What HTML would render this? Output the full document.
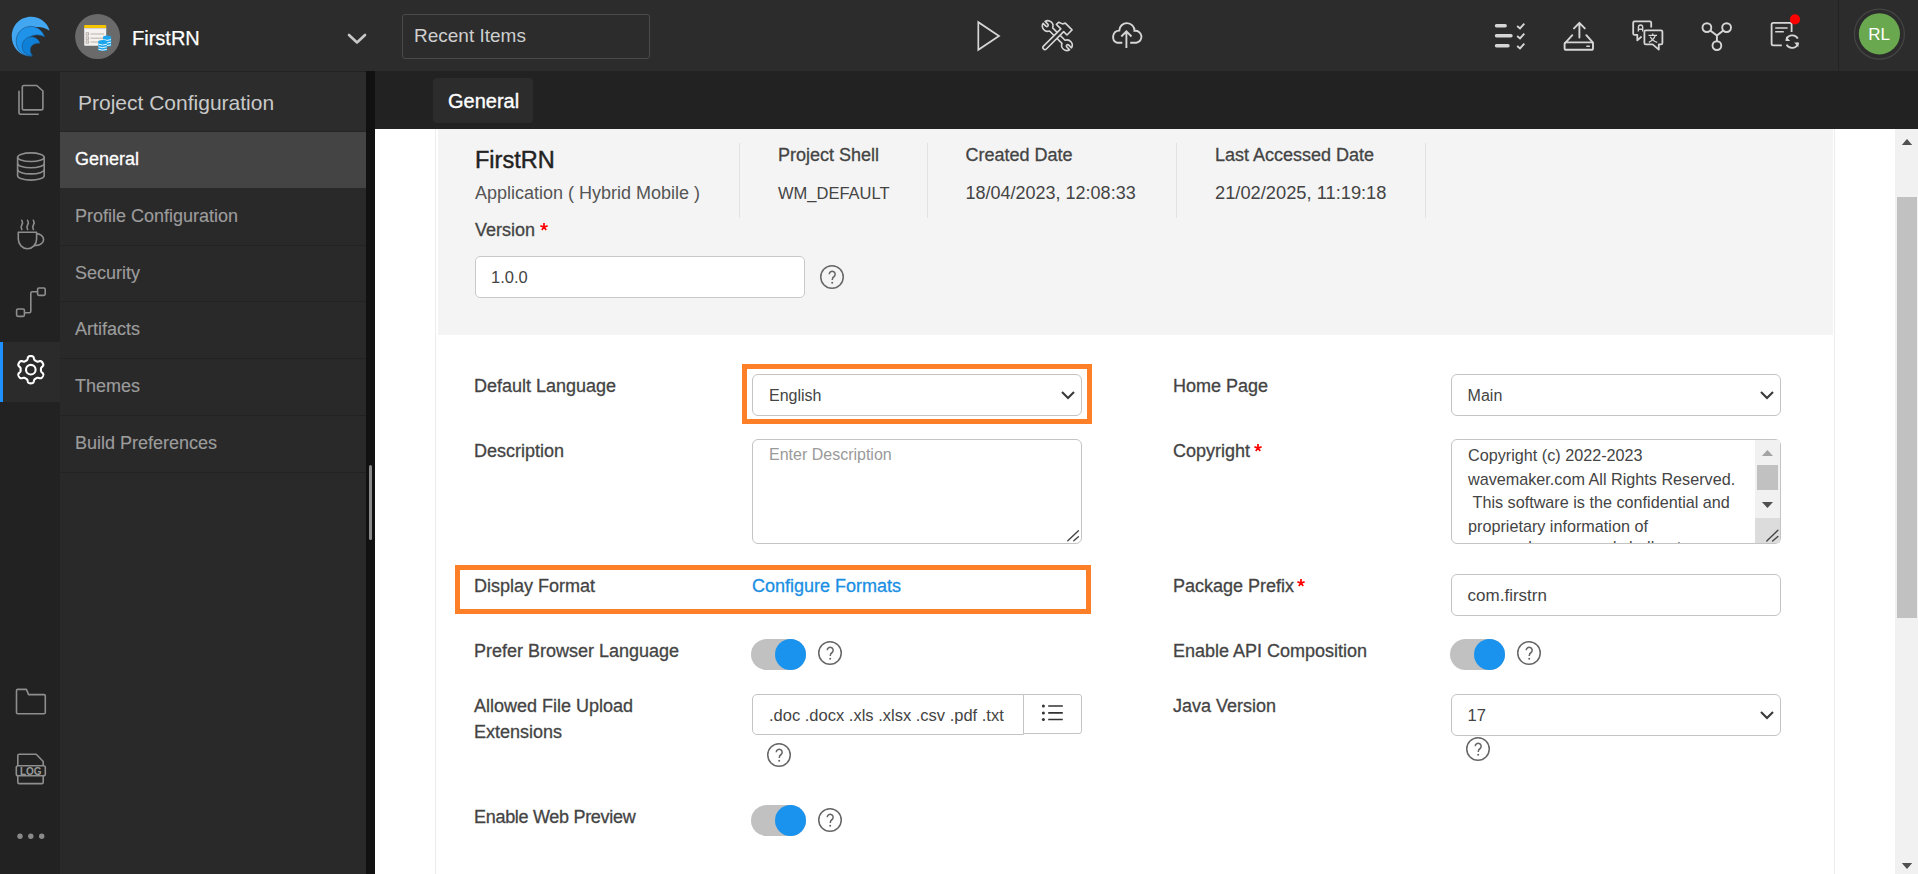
<!DOCTYPE html>
<html><head><meta charset="utf-8"><style>
*{box-sizing:border-box;margin:0;padding:0}
html,body{width:1918px;height:874px;overflow:hidden;background:#fff;font-family:"Liberation Sans",sans-serif}
.a{position:absolute}
.t{position:absolute;white-space:nowrap;line-height:1}
svg{position:absolute;overflow:visible}
</style></head><body>
<div class="a" style="left:0px;top:0px;width:1918px;height:71px;background:#2c2c2c"></div>
<div class="a" style="left:0px;top:71px;width:60px;height:803px;background:#222"></div>
<div class="a" style="left:60px;top:71px;width:306px;height:803px;background:#292929"></div>
<div class="a" style="left:60px;top:72px;width:306px;height:59px;background:#2c2c2c"></div>
<div class="a" style="left:60px;top:71px;width:306px;height:1px;background:#222"></div>
<div class="a" style="left:60px;top:131px;width:306px;height:1px;background:#252525"></div>
<div class="a" style="left:366px;top:71px;width:9px;height:803px;background:#111"></div>
<div class="a" style="left:369px;top:465px;width:3px;height:75px;background:#8a8a8a;border-radius:1.5px"></div>
<div class="a" style="left:375px;top:71px;width:1543px;height:58px;background:#222"></div>
<div class="t" style="left:132.0px;top:28.27px;font-size:20px;color:#fff;-webkit-text-stroke:0.25px #fff;">FirstRN</div>
<div class="a" style="left:402px;top:14px;width:248px;height:45px;border:1px solid #4a4a4a;border-radius:3px"></div>
<div class="t" style="left:414.0px;top:26.22px;font-size:19px;color:#cfcfcf;">Recent Items</div>
<div class="a" style="left:1838px;top:0px;width:1px;height:71px;background:#222"></div>
<div class="t" style="left:78.0px;top:91.72px;font-size:21px;color:#c9c9c9;">Project Configuration</div>
<div class="a" style="left:60px;top:132px;width:306px;height:56px;background:#444"></div>
<div class="a" style="left:60px;top:245px;width:306px;height:1px;background:#222"></div>
<div class="a" style="left:60px;top:301px;width:306px;height:1px;background:#222"></div>
<div class="a" style="left:60px;top:358px;width:306px;height:1px;background:#222"></div>
<div class="a" style="left:60px;top:415px;width:306px;height:1px;background:#222"></div>
<div class="a" style="left:60px;top:472px;width:306px;height:1px;background:#222"></div>
<div class="t" style="left:75.0px;top:149.66px;font-size:18px;color:#fff;-webkit-text-stroke:0.3px #fff;">General</div>
<div class="t" style="left:75.0px;top:207.46px;font-size:18px;color:#9c9c9c;-webkit-text-stroke:0.15px #9c9c9c;">Profile Configuration</div>
<div class="t" style="left:75.0px;top:263.86px;font-size:18px;color:#9c9c9c;-webkit-text-stroke:0.15px #9c9c9c;">Security</div>
<div class="t" style="left:75.0px;top:320.26px;font-size:18px;color:#9c9c9c;-webkit-text-stroke:0.15px #9c9c9c;">Artifacts</div>
<div class="t" style="left:75.0px;top:376.96px;font-size:18px;color:#9c9c9c;-webkit-text-stroke:0.15px #9c9c9c;">Themes</div>
<div class="t" style="left:75.0px;top:434.06px;font-size:18px;color:#9c9c9c;-webkit-text-stroke:0.15px #9c9c9c;">Build Preferences</div>
<div class="a" style="left:0px;top:342px;width:60px;height:60px;background:#2b2b2b"></div>
<div class="a" style="left:0px;top:342px;width:3px;height:60px;background:#1e90ff"></div>
<svg style="left:0;top:0" width="1918" height="71">
<!-- logo -->
<path d="M49.6,30.8 C47.5,22.5 40,16.8 31,16.8 C20,16.8 11.8,25.5 11.8,36.5 C11.8,46.5 18.5,54 26.5,55.8 L30,56 C21,50 18,40 24,32.5 C30,25.5 43,25.5 49.6,30.8Z" fill="#42a6f1"/>
<path d="M44.8,37 C42.5,30 37,26.4 31,26.4 C22.5,26.4 16.2,33 16.2,41 C16.2,48.5 21,54.5 28,56 L32,56.2 C25,51 23.5,43 28,38.5 C32.5,34 40,34 44.8,37Z" fill="#1f92ea" stroke="#1d4f7a" stroke-width="0.6"/>
<path d="M40.1,43.3 C38.5,39 35,36.8 31.5,36.8 C26,36.8 22.2,41.5 22.2,46.5 C22.2,51.5 26,55.5 32.5,56 C30,52.5 29.8,49 31.2,46.6 C33,44 36.5,43 40.1,43.3Z" fill="#0f80d8" stroke="#1d4f7a" stroke-width="0.6"/>
<!-- project icon -->
<circle cx="97.6" cy="36.6" r="22.5" fill="#6a6a6a"/>
<rect x="84.2" y="27.5" width="22" height="18.3" fill="#f3f2f0" rx="0.8"/>
<rect x="84.2" y="24.9" width="22" height="3.3" fill="#f5c400" rx="0.8"/>
<rect x="84.2" y="28" width="22" height="0.8" fill="#c8c8de"/>
<g fill="#c9bfb5"><rect x="90.5" y="33.3" width="13.5" height="1.3"/><rect x="90.5" y="37.6" width="13.5" height="1.3"/><rect x="90.5" y="41.4" width="13.5" height="1.3"/></g>
<g fill="none" stroke="#b0a79e" stroke-width="0.9"><rect x="86.2" y="32.8" width="2.4" height="2.3"/><rect x="86.2" y="37" width="2.4" height="2.3"/><rect x="86.2" y="40.9" width="2.4" height="2.3"/></g>
<g>
<rect x="103" y="37" width="8.2" height="9.5" fill="#1ba5ec" rx="1"/>
<ellipse cx="107.1" cy="37.2" rx="4.1" ry="1.6" fill="#1ba5ec"/>
<g stroke="#fff" stroke-width="0.9" fill="none"><path d="M103.2,39.6 Q107.1,41.2 111,39.6"/><path d="M103.2,42.2 Q107.1,43.8 111,42.2"/><path d="M103.2,44.8 Q107.1,46.4 111,44.8"/></g>
<rect x="98.3" y="41.5" width="8.7" height="9.2" fill="#1ba5ec" rx="1"/>
<ellipse cx="102.6" cy="41.6" rx="4.35" ry="1.7" fill="#1ba5ec"/>
<g stroke="#fff" stroke-width="0.9" fill="none"><path d="M98.4,44.2 Q102.6,45.9 106.9,44.2"/><path d="M98.4,46.8 Q102.6,48.5 106.9,46.8"/><path d="M98.4,49.3 Q102.6,51 106.9,49.3"/></g>
</g>
<!-- chevron -->
<polyline points="349,35 357,42.5 365,35" fill="none" stroke="#c8c8c8" stroke-width="2.6" stroke-linecap="round" stroke-linejoin="round"/>
<!-- play -->
<path d="M978.3,22.2 L978.3,49.8 L999,36Z" fill="none" stroke="#d6d6d6" stroke-width="1.7" stroke-linejoin="miter"/>
<!-- tools: wrench -->
<g transform="translate(1057.3,35.6) rotate(45)" fill="#2b2b2b" stroke="#d6d6d6" stroke-width="1.6" stroke-linejoin="round">
<path d="M-8.78,-2.2 L8.78,-2.2 A5.3 5.3 0 0 1 18.71,-1.4 L14.8,-1.4 A1.4 1.4 0 0 0 14.8,1.4 L18.71,1.4 A5.3 5.3 0 0 1 8.78,2.2 L-8.78,2.2 A5.3 5.3 0 0 1 -18.71,1.4 L-14.8,1.4 A1.4 1.4 0 0 0 -14.8,-1.4 L-18.71,-1.4 A5.3 5.3 0 0 1 -8.78,-2.2Z"/>
</g>
<g transform="translate(1057.5,35) rotate(-45)" fill="#2b2b2b" stroke="#d6d6d6" stroke-width="1.6" stroke-linejoin="round">
<path d="M-17.8,-2 L6.7,-2 L6.7,-8.3 L10,-8.1 L11.3,-4.4 L13.9,-2.9 L13.9,6.7 L6.7,6.7 L6.7,2 L-17.8,2 A2 2 0 0 1 -17.8,-2Z"/>
</g>
<!-- cloud upload -->
<path d="M1122.3,42.8 H1117.2 A6.3 6.3 0 0 1 1119.3,30.6 A7.6 7.6 0 0 1 1134.5,30.8 A6 6 0 0 1 1136.3,42.8 H1130.2" fill="none" stroke="#d6d6d6" stroke-width="1.9"/>
<path d="M1126.4,48 V32 M1121.3,36.5 L1126.4,31.3 L1131.5,36.5" fill="none" stroke="#d6d6d6" stroke-width="1.9"/>
<!-- list check -->
<g stroke="#d6d6d6" stroke-linecap="round" fill="none">
<path d="M1496.5,25.8 H1505.2 M1496.5,35.8 H1511 M1496.5,45.8 H1508" stroke-width="3.4"/>
<path d="M1517.2,26 L1520,28.4 L1524.3,23.6 M1517.2,36 L1520,38.4 L1524.3,33.6 M1517.2,46 L1520,48.4 L1524.3,43.6" stroke-width="1.9" stroke-linecap="butt"/>
</g>
<!-- upload tray -->
<g stroke="#d6d6d6" fill="none" stroke-width="1.9" stroke-linecap="round" stroke-linejoin="round">
<path d="M1579.4,37.5 V23 M1574,28.4 L1579.4,22.8 L1584.8,28.4"/>
<path d="M1572.3,35.2 L1565.5,42.6 M1586.3,35.2 L1593,42.6"/>
<rect x="1564.6" y="42.4" width="28.4" height="7.4" rx="1.6"/>
<path d="M1586.8,46.2 H1589.4" stroke-width="1.4"/>
</g>
<!-- translate -->
<g stroke="#d6d6d6" fill="none" stroke-width="1.8" stroke-linejoin="round">
<path d="M1651.2,27.6 V22.8 Q1651.2,21.4 1649.8,21.4 H1634.6 Q1633.2,21.4 1633.2,22.8 V33.4 Q1633.2,34.8 1634.6,34.8 H1637.3 V40.3 L1641.6,36.5"/>
<path d="M1645.8,30.4 H1661 Q1662.4,30.4 1662.4,31.8 V43 Q1662.4,44.4 1661,44.4 H1658.8 V49.6 L1652.6,44.4 H1645.8 Q1644.4,44.4 1644.4,43 V31.8 Q1644.4,30.4 1645.8,30.4Z"/>
</g>
<path d="M1638.4,31.6 V27.3 A2.15 2.3 0 0 1 1642.7,27.3 V31.6 M1638.4,29.2 H1642.7" stroke="#d6d6d6" stroke-width="1.4" fill="none"/>
<path d="M1648.5,35.4 H1657 M1652.7,33.6 V35.4 M1655.3,35.4 Q1653.8,40 1648.8,42.3 M1650.2,36.8 Q1652.5,41 1657.2,42.3" stroke="#d6d6d6" stroke-width="1.3" fill="none"/>
<!-- fork -->
<g stroke="#d6d6d6" fill="none" stroke-width="1.9">
<circle cx="1706.9" cy="27.6" r="4.4"/><circle cx="1726.6" cy="27.6" r="4.4"/><circle cx="1716.9" cy="45.6" r="4.4"/>
<path d="M1710.2,30.6 L1716.9,35.6 L1723.3,30.6 M1716.9,35.6 V41.2"/>
</g>
<!-- doc sync -->
<g stroke="#d6d6d6" fill="none" stroke-width="1.8" stroke-linecap="butt">
<path d="M1781.8,45.4 H1773.2 Q1771.6,45.4 1771.6,43.8 V24.4 Q1771.6,22.8 1773.2,22.8 H1790 Q1791.6,22.8 1791.6,24.4 V32"/>
<path d="M1775.2,28 H1787.6 M1775.2,31.8 H1783.8" stroke-width="1.5"/>
<path d="M1786.2,40.8 A6.2 6.2 0 0 1 1797.8,38.6 M1798.2,42.6 A6.2 6.2 0 0 1 1786.6,44.6"/>
</g>
<path d="M1786,36.3 V41 H1790.2Z M1798.4,47.2 V42.5 H1794.2Z" fill="#d6d6d6"/>
<circle cx="1795" cy="19.4" r="5.1" fill="#f00"/>
<!-- separator + avatar -->
<rect x="1838" y="0" width="1" height="71" fill="#222"/>
<circle cx="1879.4" cy="34.1" r="25" fill="none" stroke="#454545" stroke-width="1.2"/>
<circle cx="1879.4" cy="33.8" r="20.6" fill="#6aa84f"/>
</svg>
<div class="t" style="left:1868.3px;top:26.41px;font-size:17px;color:#fff;">RL</div>
<svg style="left:0;top:71px" width="60" height="803">
<g transform="translate(0,-71)" fill="none" stroke="#8e8e8e" stroke-width="1.6" stroke-linejoin="round">
<!-- pages -->
<path d="M36.8,85.5 H24 Q22.3,85.5 22.3,87.2 V108.2 Q22.3,109.9 24,109.9 H41.2 Q42.9,109.9 42.9,108.2 V91Z"/>
<path d="M19,90.8 V112.5 Q19,114.2 20.7,114.2 H38.8"/>
<!-- db -->
<ellipse cx="30.9" cy="157.2" rx="13.3" ry="4.3"/>
<path d="M17.6,157.2 V175.8 A13.3 4.3 0 0 0 44.2,175.8 V157.2"/>
<path d="M17.6,163.4 A13.3 4.3 0 0 0 44.2,163.4 M17.6,169.6 A13.3 4.3 0 0 0 44.2,169.6"/>
<!-- coffee -->
<path d="M21.8,229.5 Q20.3,227.3 21.8,225 Q23.3,222.7 21.8,220.3 M27.6,229.5 Q26.1,227.3 27.6,225 Q29.1,222.7 27.6,220.3 M33.4,229.5 Q31.9,227.3 33.4,225 Q34.9,222.7 33.4,220.3" stroke-linecap="round"/>
<path d="M18.3,232.2 H36.6 V239 A9.15 9.7 0 0 1 18.3,239Z"/>
<path d="M36.2,233.6 A7.4 5.9 0 0 1 36.2,245.4 H34"/>
<!-- flow -->
<rect x="37.6" y="288" width="7.6" height="7.4" rx="1.3"/>
<rect x="16.6" y="309" width="7.8" height="7.4" rx="1.3"/>
<path d="M24.4,312.7 H29.4 Q30.8,312.7 30.8,311.3 V293.3 Q30.8,291.7 32.4,291.7 H37.6"/>
<!-- folder -->
<path d="M16.5,712.5 V690.7 Q16.5,689.4 17.8,689.4 H26.4 L28.6,694.6 H44 Q45.3,694.6 45.3,695.9 V712.5 Q45.3,713.8 44,713.8 H17.8 Q16.5,713.8 16.5,712.5Z"/>
<!-- log -->
<path d="M17.8,765.7 V755.6 Q17.8,754.2 19.2,754.2 H36.2 L43.2,761.5 V765.7 M17.8,775.8 V782.2 Q17.8,783.6 19.2,783.6 H41.8 Q43.2,783.6 43.2,782.2 V775.8"/>
<rect x="16.3" y="765.7" width="29" height="10.1" rx="1.8"/>
</g>
<text x="30.8" y="703.6" text-anchor="middle" font-family="Liberation Sans" font-weight="700" font-size="10" fill="#9a9a9a">LOG</text>
<g fill="#8a8a8a"><circle cx="20" cy="765.3" r="2.7"/><circle cx="30.8" cy="765.3" r="2.7"/><circle cx="41.7" cy="765.3" r="2.7"/></g>
<g transform="translate(0,-71)">
<path d="M40.95,369.70 L40.95,369.97 L40.95,370.23 L40.95,370.50 L40.97,370.77 L41.00,371.04 L41.07,371.33 L41.22,371.63 L41.46,371.97 L41.84,372.35 L42.29,372.78 L42.74,373.24 L43.07,373.69 L43.25,374.11 L43.31,374.50 L43.28,374.87 L43.20,375.22 L43.09,375.56 L42.95,375.89 L42.79,376.21 L42.62,376.52 L42.44,376.83 L42.24,377.13 L42.02,377.41 L41.78,377.68 L41.52,377.93 L41.21,378.13 L40.84,378.28 L40.39,378.33 L39.83,378.27 L39.21,378.11 L38.61,377.93 L38.09,377.80 L37.68,377.75 L37.35,377.78 L37.06,377.86 L36.81,377.97 L36.57,378.09 L36.34,378.22 L36.11,378.36 L35.88,378.49 L35.64,378.62 L35.41,378.76 L35.18,378.89 L34.96,379.04 L34.74,379.20 L34.53,379.41 L34.34,379.69 L34.17,380.07 L34.02,380.58 L33.88,381.19 L33.71,381.81 L33.48,382.32 L33.21,382.69 L32.90,382.93 L32.56,383.10 L32.22,383.20 L31.87,383.27 L31.51,383.32 L31.16,383.34 L30.80,383.35 L30.44,383.34 L30.09,383.32 L29.73,383.27 L29.38,383.20 L29.04,383.10 L28.70,382.93 L28.39,382.69 L28.12,382.32 L27.89,381.81 L27.72,381.19 L27.58,380.58 L27.43,380.07 L27.26,379.69 L27.07,379.41 L26.86,379.20 L26.64,379.04 L26.42,378.89 L26.19,378.76 L25.96,378.62 L25.73,378.49 L25.49,378.36 L25.26,378.22 L25.03,378.09 L24.79,377.97 L24.54,377.86 L24.25,377.78 L23.92,377.75 L23.51,377.80 L22.99,377.93 L22.39,378.11 L21.77,378.27 L21.21,378.33 L20.76,378.28 L20.39,378.13 L20.08,377.93 L19.82,377.68 L19.58,377.41 L19.36,377.13 L19.16,376.83 L18.98,376.52 L18.81,376.21 L18.65,375.89 L18.51,375.56 L18.40,375.22 L18.32,374.87 L18.29,374.50 L18.35,374.11 L18.53,373.69 L18.86,373.24 L19.31,372.78 L19.76,372.35 L20.14,371.97 L20.38,371.63 L20.53,371.33 L20.60,371.04 L20.63,370.77 L20.65,370.50 L20.65,370.23 L20.65,369.97 L20.65,369.70 L20.65,369.43 L20.65,369.17 L20.65,368.90 L20.63,368.63 L20.60,368.36 L20.53,368.07 L20.38,367.77 L20.14,367.43 L19.76,367.05 L19.31,366.62 L18.86,366.16 L18.53,365.71 L18.35,365.29 L18.29,364.90 L18.32,364.53 L18.40,364.18 L18.51,363.84 L18.65,363.51 L18.81,363.19 L18.98,362.88 L19.16,362.57 L19.36,362.27 L19.58,361.99 L19.82,361.72 L20.08,361.47 L20.39,361.27 L20.76,361.12 L21.21,361.07 L21.77,361.13 L22.39,361.29 L22.99,361.47 L23.51,361.60 L23.92,361.65 L24.25,361.62 L24.54,361.54 L24.79,361.43 L25.03,361.31 L25.26,361.18 L25.49,361.04 L25.72,360.91 L25.96,360.78 L26.19,360.64 L26.42,360.51 L26.64,360.36 L26.86,360.20 L27.07,359.99 L27.26,359.71 L27.43,359.33 L27.58,358.82 L27.72,358.21 L27.89,357.59 L28.12,357.08 L28.39,356.71 L28.70,356.47 L29.04,356.30 L29.38,356.20 L29.73,356.13 L30.09,356.08 L30.44,356.06 L30.80,356.05 L31.16,356.06 L31.51,356.08 L31.87,356.13 L32.22,356.20 L32.56,356.30 L32.90,356.47 L33.21,356.71 L33.48,357.08 L33.71,357.59 L33.88,358.21 L34.02,358.82 L34.17,359.33 L34.34,359.71 L34.53,359.99 L34.74,360.20 L34.96,360.36 L35.18,360.51 L35.41,360.64 L35.64,360.78 L35.88,360.91 L36.11,361.04 L36.34,361.18 L36.57,361.31 L36.81,361.43 L37.06,361.54 L37.35,361.62 L37.68,361.65 L38.09,361.60 L38.61,361.47 L39.21,361.29 L39.83,361.13 L40.39,361.07 L40.84,361.12 L41.21,361.27 L41.52,361.47 L41.78,361.72 L42.02,361.99 L42.24,362.27 L42.44,362.57 L42.62,362.88 L42.79,363.19 L42.95,363.51 L43.09,363.84 L43.20,364.18 L43.28,364.53 L43.31,364.90 L43.25,365.29 L43.07,365.71 L42.74,366.16 L42.29,366.62 L41.84,367.05 L41.46,367.43 L41.22,367.77 L41.07,368.07 L41.00,368.36 L40.97,368.63 L40.95,368.90 L40.95,369.17 L40.95,369.43Z" fill="none" stroke="#fff" stroke-width="2.1" stroke-linejoin="round"/>
<circle cx="30.8" cy="369.7" r="4.8" fill="none" stroke="#fff" stroke-width="2.1"/>
</g>
</svg>
<div class="a" style="left:433px;top:78px;width:100px;height:45px;background:#2c2c2c;border-radius:4px"></div>
<div class="t" style="left:448.0px;top:90.77px;font-size:20px;color:#fff;-webkit-text-stroke:0.35px #fff;">General</div>
<div class="a" style="left:435px;top:129px;width:1px;height:745px;background:#ececec"></div>
<div class="a" style="left:438px;top:129px;width:1395px;height:206px;background:#f4f4f4"></div>
<div class="a" style="left:1834px;top:129px;width:1px;height:745px;background:#ececec"></div>
<div class="t" style="left:475.0px;top:148.61px;font-size:23.5px;color:#222;-webkit-text-stroke:0.45px #222;">FirstRN</div>
<div class="t" style="left:475.0px;top:184.06px;font-size:18px;color:#555;">Application ( Hybrid Mobile )</div>
<div class="a" style="left:739px;top:143px;width:1px;height:75px;background:#e2e2e2"></div>
<div class="a" style="left:927px;top:143px;width:1px;height:75px;background:#e2e2e2"></div>
<div class="a" style="left:1176px;top:143px;width:1px;height:75px;background:#e2e2e2"></div>
<div class="a" style="left:1425px;top:143px;width:1px;height:75px;background:#e2e2e2"></div>
<div class="t" style="left:778.0px;top:146.06px;font-size:18px;color:#444;-webkit-text-stroke:0.3px #444;">Project Shell</div>
<div class="t" style="left:778.0px;top:185.33px;font-size:16.5px;color:#444;">WM_DEFAULT</div>
<div class="t" style="left:965.5px;top:146.06px;font-size:18px;color:#444;-webkit-text-stroke:0.3px #444;">Created Date</div>
<div class="t" style="left:965.5px;top:184.06px;font-size:18px;color:#444;">18/04/2023, 12:08:33</div>
<div class="t" style="left:1215.0px;top:146.06px;font-size:18px;color:#444;-webkit-text-stroke:0.3px #444;">Last Accessed Date</div>
<div class="t" style="left:1215.0px;top:183.81px;font-size:18.3px;color:#444;">21/02/2025, 11:19:18</div>
<div class="t" style="left:475.0px;top:221.16px;font-size:18px;color:#444;-webkit-text-stroke:0.3px #444;">Version</div>
<svg style="left:537.5px;top:221.3px" width="12" height="12"><path d="M6,6 V2.1 M6,6 L2.4,4.9 M6,6 L9.6,4.9 M6,6 L3.8,9 M6,6 L8.2,9" stroke="#f00" stroke-width="1.7" stroke-linecap="butt"/></svg>
<div class="a" style="left:475px;top:256px;width:330px;height:42px;background:#fff;border:1px solid #c9c9c9;border-radius:5px"></div>
<div class="t" style="left:491.0px;top:269.43px;font-size:16.5px;color:#444;">1.0.0</div>
<svg style="left:818px;top:263px" width="28" height="28"><g transform="translate(14,14)" fill="none" stroke="#666" stroke-width="1.5"><circle cx="0" cy="0" r="11.25"/><path d="M-2.75,-2.7 A2.95 2.95 0 1 1 2.6,-1.0 C1,0 0.2,0.7 0.2,2.9" stroke-width="1.5"/></g><circle cx="14.2" cy="19.7" r="1.0" fill="#666"/></svg>
<div class="t" style="left:474.0px;top:376.76px;font-size:18px;color:#444;-webkit-text-stroke:0.3px #444;">Default Language</div>
<div class="a" style="left:742px;top:364px;width:350px;height:60px;border:5px solid #fd7f27"></div>
<div class="a" style="left:752px;top:374px;width:330px;height:42px;background:#fff;border:1px solid #c4c4c4;border-radius:6px"></div>
<div class="t" style="left:769.0px;top:387.76px;font-size:16px;color:#444;">English</div>
<svg style="left:1061px;top:390.6px" width="14" height="8.0"><polyline points="1,1 7.0,7.0 13,1" fill="none" stroke="#3a3a3a" stroke-width="2.1"/></svg>
<div class="t" style="left:474.0px;top:441.76px;font-size:18px;color:#444;-webkit-text-stroke:0.3px #444;">Description</div>
<div class="a" style="left:752px;top:439px;width:330px;height:105px;background:#fff;border:1px solid #c4c4c4;border-radius:6px"></div>
<div class="t" style="left:769.0px;top:447.46px;font-size:16px;color:#9a9a9a;">Enter Description</div>
<div class="a" style="left:455px;top:565px;width:636px;height:49px;border:5px solid #fd7f27"></div>
<div class="t" style="left:474.0px;top:577.26px;font-size:18px;color:#444;-webkit-text-stroke:0.3px #444;">Display Format</div>
<div class="t" style="left:752.0px;top:577.26px;font-size:18px;color:#1a8fe3;-webkit-text-stroke:0.3px #1a8fe3;">Configure Formats</div>
<div class="t" style="left:474.0px;top:641.76px;font-size:18px;color:#444;-webkit-text-stroke:0.3px #444;">Prefer Browser Language</div>
<div class="a" style="left:751px;top:639px;width:55px;height:31px;background:#c1c1c1;border-radius:16px"></div>
<div class="a" style="left:775px;top:639px;width:31px;height:31px;background:#1a93ee;border-radius:50%"></div>
<svg style="left:816px;top:639px" width="28" height="28"><g transform="translate(14,14)" fill="none" stroke="#666" stroke-width="1.5"><circle cx="0" cy="0" r="11.25"/><path d="M-2.75,-2.7 A2.95 2.95 0 1 1 2.6,-1.0 C1,0 0.2,0.7 0.2,2.9" stroke-width="1.5"/></g><circle cx="14.2" cy="19.7" r="1.0" fill="#666"/></svg>
<div class="t" style="left:474.0px;top:697.36px;font-size:18px;color:#444;-webkit-text-stroke:0.3px #444;">Allowed File Upload</div>
<div class="t" style="left:474.0px;top:723.26px;font-size:18px;color:#444;-webkit-text-stroke:0.3px #444;">Extensions</div>
<div class="a" style="left:752px;top:694px;width:272px;height:41px;background:#fff;border:1px solid #c4c4c4;border-radius:5px 0 0 5px"></div>
<div class="a" style="left:1023px;top:694px;width:59px;height:40px;background:#fff;border:1px solid #c4c4c4;border-radius:0 3px 3px 0"></div>
<div class="t" style="left:769.0px;top:707.33px;font-size:16.5px;color:#444;">.doc .docx .xls .xlsx .csv .pdf .txt</div>
<svg style="left:765px;top:741px" width="28" height="28"><g transform="translate(14,14)" fill="none" stroke="#666" stroke-width="1.5"><circle cx="0" cy="0" r="11.25"/><path d="M-2.75,-2.7 A2.95 2.95 0 1 1 2.6,-1.0 C1,0 0.2,0.7 0.2,2.9" stroke-width="1.5"/></g><circle cx="14.2" cy="19.7" r="1.0" fill="#666"/></svg>
<div class="t" style="left:474.0px;top:808.06px;font-size:18px;color:#444;-webkit-text-stroke:0.3px #444;letter-spacing:-0.3px">Enable Web Preview</div>
<div class="a" style="left:751px;top:805px;width:55px;height:31px;background:#c1c1c1;border-radius:16px"></div>
<div class="a" style="left:775px;top:805px;width:31px;height:31px;background:#1a93ee;border-radius:50%"></div>
<svg style="left:816px;top:806px" width="28" height="28"><g transform="translate(14,14)" fill="none" stroke="#666" stroke-width="1.5"><circle cx="0" cy="0" r="11.25"/><path d="M-2.75,-2.7 A2.95 2.95 0 1 1 2.6,-1.0 C1,0 0.2,0.7 0.2,2.9" stroke-width="1.5"/></g><circle cx="14.2" cy="19.7" r="1.0" fill="#666"/></svg>
<div class="t" style="left:1173.0px;top:376.86px;font-size:18px;color:#444;-webkit-text-stroke:0.3px #444;">Home Page</div>
<div class="a" style="left:1451px;top:374px;width:330px;height:42px;background:#fff;border:1px solid #c4c4c4;border-radius:6px"></div>
<div class="t" style="left:1467.6px;top:387.76px;font-size:16px;color:#444;">Main</div>
<svg style="left:1760px;top:390.6px" width="14" height="8.0"><polyline points="1,1 7.0,7.0 13,1" fill="none" stroke="#3a3a3a" stroke-width="2.1"/></svg>
<div class="t" style="left:1173.0px;top:441.76px;font-size:18px;color:#444;-webkit-text-stroke:0.3px #444;">Copyright</div>
<svg style="left:1251.5px;top:442.2px" width="12" height="12"><path d="M6,6 V2.1 M6,6 L2.4,4.9 M6,6 L9.6,4.9 M6,6 L3.8,9 M6,6 L8.2,9" stroke="#f00" stroke-width="1.7" stroke-linecap="butt"/></svg>
<div class="a" style="left:1451px;top:439px;width:330px;height:105px;background:#fff;border:1px solid #c4c4c4;border-radius:6px;overflow:hidden"></div>
<div class="a" style="left:1452px;top:440px;width:303px;height:103px;overflow:hidden"><div class="t" style="left:16.0px;top:6.89px;font-size:16.2px;color:#444;">Copyright (c) 2022-2023</div>
<div class="t" style="left:16.0px;top:31.09px;font-size:16.2px;color:#444;">wavemaker.com All Rights Reserved.</div>
<div class="t" style="left:16.0px;top:53.79px;font-size:16.2px;color:#444;">&nbsp;This software is the confidential and</div>
<div class="t" style="left:16.0px;top:77.69px;font-size:16.2px;color:#444;">proprietary information of</div>
<div class="t" style="left:16.0px;top:99.29px;font-size:16.2px;color:#444;">wavemaker.com and shall not</div>
</div>
<div class="a" style="left:1755px;top:440px;width:25px;height:78px;background:#f1f1f1"></div>
<div class="a" style="left:1757px;top:465px;width:21px;height:25px;background:#c1c1c1"></div>
<div class="a" style="left:1755px;top:518px;width:25px;height:25px;background:#dcdcdc"></div>
<div class="t" style="left:1173.0px;top:577.26px;font-size:18px;color:#444;-webkit-text-stroke:0.3px #444;">Package Prefix</div>
<svg style="left:1294.5px;top:577px" width="12" height="12"><path d="M6,6 V2.1 M6,6 L2.4,4.9 M6,6 L9.6,4.9 M6,6 L3.8,9 M6,6 L8.2,9" stroke="#f00" stroke-width="1.7" stroke-linecap="butt"/></svg>
<div class="a" style="left:1451px;top:574px;width:330px;height:42px;background:#fff;border:1px solid #c4c4c4;border-radius:6px"></div>
<div class="t" style="left:1467.6px;top:586.61px;font-size:17px;color:#444;">com.firstrn</div>
<div class="t" style="left:1173.0px;top:641.76px;font-size:18px;color:#444;-webkit-text-stroke:0.3px #444;">Enable API Composition</div>
<div class="a" style="left:1450px;top:639px;width:55px;height:31px;background:#c1c1c1;border-radius:16px"></div>
<div class="a" style="left:1474px;top:639px;width:31px;height:31px;background:#1a93ee;border-radius:50%"></div>
<svg style="left:1515px;top:639px" width="28" height="28"><g transform="translate(14,14)" fill="none" stroke="#666" stroke-width="1.5"><circle cx="0" cy="0" r="11.25"/><path d="M-2.75,-2.7 A2.95 2.95 0 1 1 2.6,-1.0 C1,0 0.2,0.7 0.2,2.9" stroke-width="1.5"/></g><circle cx="14.2" cy="19.7" r="1.0" fill="#666"/></svg>
<div class="t" style="left:1173.0px;top:697.36px;font-size:18px;color:#444;-webkit-text-stroke:0.3px #444;">Java Version</div>
<div class="a" style="left:1451px;top:694px;width:330px;height:42px;background:#fff;border:1px solid #c4c4c4;border-radius:6px"></div>
<div class="t" style="left:1467.6px;top:707.03px;font-size:16.5px;color:#444;">17</div>
<svg style="left:1760px;top:710.8px" width="14" height="8.0"><polyline points="1,1 7.0,7.0 13,1" fill="none" stroke="#3a3a3a" stroke-width="2.1"/></svg>
<svg style="left:1464px;top:734.5px" width="28" height="28"><g transform="translate(14,14)" fill="none" stroke="#666" stroke-width="1.5"><circle cx="0" cy="0" r="11.25"/><path d="M-2.75,-2.7 A2.95 2.95 0 1 1 2.6,-1.0 C1,0 0.2,0.7 0.2,2.9" stroke-width="1.5"/></g><circle cx="14.2" cy="19.7" r="1.0" fill="#666"/></svg>
<div class="a" style="left:1895px;top:129px;width:23px;height:745px;background:#f1f1f1"></div>
<div class="a" style="left:1897px;top:197px;width:20px;height:421px;background:#c1c1c1"></div>
<svg style="left:0;top:0" width="1918" height="874">
<g fill="#333"><circle cx="1043.4" cy="706" r="1.5"/><circle cx="1043.4" cy="712.9" r="1.5"/><circle cx="1043.4" cy="719.5" r="1.5"/></g>
<path d="M1048.2,706 H1062.8 M1048.2,712.9 H1062.8 M1048.2,719.5 H1062.8" stroke="#333" stroke-width="1.6"/>
<path d="M1067.8,540.7 L1078.4,530.8 M1073.8,540.7 L1078.4,536.8" stroke="#444" stroke-width="1.4" stroke-linecap="round"/>
<path d="M1766.8,541 L1777.9,530.3 M1772.6,541 L1777.9,536.5" stroke="#444" stroke-width="1.4" stroke-linecap="round"/>
<path d="M1761.9,456 L1767.45,450.1 L1773,456Z" fill="#a3a3a3"/>
<path d="M1761.9,501.9 L1767.45,508 L1773,501.9Z" fill="#505050"/>
<path d="M1901.8,144.9 L1907,138.9 L1912.2,144.9Z" fill="#505050"/>
<path d="M1901.8,862.9 L1907,868.9 L1912.2,862.9Z" fill="#505050"/>
</svg>
</body></html>
